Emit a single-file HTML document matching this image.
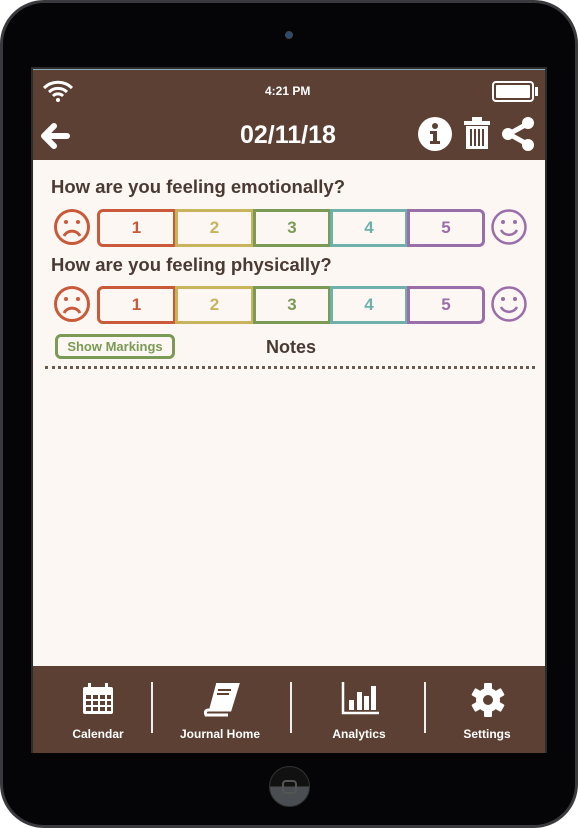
<!DOCTYPE html>
<html><head><style>
*{margin:0;padding:0;box-sizing:border-box}
body{width:578px;height:822px;background:#fff;font-family:"Liberation Sans",Arial,sans-serif;position:relative;overflow:hidden}
.dev{position:absolute;left:0;top:0;width:578px;height:828px;background:#050508;border-radius:44px;border:3px solid #3a3a3e}
.scr{position:absolute;left:31px;top:67px;width:516px;height:686px;background:#fcf7f3;border:2px solid #2c2c2c}
.hdr{position:absolute;left:0;top:0;width:512px;height:91px;background:#5c4033;border-top:1px solid #8ab}
.tab{position:absolute;left:0;top:597px;width:512px;height:87px;background:#5c4033}
.w{color:#fff;font-weight:bold;position:absolute}
.q{position:absolute;left:18px;font-size:18.5px;font-weight:bold;color:#4a3a33}
.row{position:absolute;left:64px;height:38px;width:388px}
.b{position:absolute;top:0;height:100%;border:3px solid;font-size:17px;font-weight:bold;text-align:center;line-height:32px}
.lbl{position:absolute;top:61px;font-size:12px;color:#fff;font-weight:bold;transform:translateX(-50%);white-space:nowrap}
.div{position:absolute;top:16px;width:2px;height:51px;background:#eee}
</style></head><body>
<div class="dev"></div>
<div style="position:absolute;left:285px;top:31px;width:8px;height:8px;border-radius:50%;background:#2a4a70;border:1px solid #444"></div>
<div style="position:absolute;left:269px;top:766px;width:41px;height:41px;border-radius:50%;background:linear-gradient(#111 50%,#4a4e52 50%);border:1px solid #333"></div>
<div style="position:absolute;left:282px;top:780px;width:15px;height:14px;border:2px solid #555;border-radius:4px"></div>
<div class="scr">
<div class="hdr">
<svg style="position:absolute;left:9px;top:10px" width="32" height="22" viewBox="0 0 32 22"><path d="M2 8A20 20 0 0 1 30 8M7 12A13 13 0 0 1 25 12M11 16A7 7 0 0 1 21 16" stroke="#fff" stroke-width="3" fill="none"/><circle cx="16" cy="20" r="2" fill="#fff"/></svg>
<div class="w" style="left:232px;top:14px;font-size:12px">4:21 PM</div>
<div style="position:absolute;left:459px;top:11px;width:42px;height:21px;border:2px solid #fff;border-radius:4px;padding:2px"><div style="background:#fff;height:100%;border-radius:1px"></div></div>
<div style="position:absolute;left:502px;top:17px;width:3px;height:9px;background:#fff"></div>
<svg style="position:absolute;left:6px;top:50px" width="32" height="32" viewBox="0 0 32 32"><path d="M28 16H6M15 6L5 16L15 26" stroke="#fff" stroke-width="6" fill="none" stroke-linecap="round" stroke-linejoin="round"/></svg>
<div class="w" style="left:207px;top:51px;font-size:25px">02/11/18</div>
<svg style="position:absolute;left:385px;top:47px" width="34" height="34" viewBox="0 0 34 34"><circle cx="17" cy="17" r="17" fill="#fff"/><circle cx="17" cy="9" r="3" fill="#5c4033"/><path d="M12 14h7v10h3v3H12v-3h3v-7h-3z" fill="#5c4033"/></svg>
<svg style="position:absolute;left:430px;top:47px" width="28" height="34" viewBox="0 0 28 34"><rect x="1" y="4" width="26" height="4" fill="#fff"/><rect x="9" y="0" width="10" height="5" fill="#fff"/><path d="M3 9h22v23H3z" fill="#fff"/><path d="M8 12v17M12 12v17M16 12v17M20 12v17" stroke="#5c4033" stroke-width="2"/></svg>
<svg style="position:absolute;left:468px;top:46px" width="34" height="36" viewBox="0 0 34 36"><path d="M26 8L8 18L26 28" stroke="#fff" stroke-width="5" fill="none"/><circle cx="27" cy="7" r="6" fill="#fff"/><circle cx="7" cy="18" r="6" fill="#fff"/><circle cx="27" cy="29" r="6" fill="#fff"/></svg>
</div>
<div class="q" style="top:107px">How are you feeling emotionally?</div>
<div class="q" style="top:185px">How are you feeling physically?</div>
<svg style="position:absolute;left:20px;top:139px" width="38" height="38" viewBox="0 0 38 38"><circle cx="19" cy="19" r="16.5" stroke="#c85a3a" stroke-width="3" fill="none"/><circle cx="13" cy="14" r="2" fill="#c85a3a"/><circle cx="25" cy="14" r="2" fill="#c85a3a"/><path d="M11 28A9 9 0 0 1 27 28" stroke="#c85a3a" stroke-width="3" fill="none"/></svg>
<svg style="position:absolute;left:457px;top:139px" width="38" height="38" viewBox="0 0 38 38"><circle cx="19" cy="19" r="16.5" stroke="#9a6ea8" stroke-width="2.5" fill="none"/><circle cx="13" cy="14" r="2" fill="#9a6ea8"/><circle cx="25" cy="14" r="2" fill="#9a6ea8"/><path d="M11 22A9 9 0 0 0 27 22" stroke="#9a6ea8" stroke-width="2.5" fill="none"/></svg>
<svg style="position:absolute;left:20px;top:216px" width="38" height="38" viewBox="0 0 38 38"><circle cx="19" cy="19" r="16.5" stroke="#c85a3a" stroke-width="3" fill="none"/><circle cx="13" cy="14" r="2" fill="#c85a3a"/><circle cx="25" cy="14" r="2" fill="#c85a3a"/><path d="M11 28A9 9 0 0 1 27 28" stroke="#c85a3a" stroke-width="3" fill="none"/></svg>
<svg style="position:absolute;left:457px;top:216px" width="38" height="38" viewBox="0 0 38 38"><circle cx="19" cy="19" r="16.5" stroke="#9a6ea8" stroke-width="2.5" fill="none"/><circle cx="13" cy="14" r="2" fill="#9a6ea8"/><circle cx="25" cy="14" r="2" fill="#9a6ea8"/><path d="M11 22A9 9 0 0 0 27 22" stroke="#9a6ea8" stroke-width="2.5" fill="none"/></svg>
<div class="row" style="top:140px">
<div class="b" style="left:0;width:79px;border-color:#c85a3a;color:#c85a3a;border-radius:6px 0 0 6px">1</div>
<div class="b" style="left:78px;width:79px;border-color:#c8b45a;color:#c8b45a">2</div>
<div class="b" style="left:156px;width:78px;border-color:#7a9a55;color:#7a9a55">3</div>
<div class="b" style="left:233px;width:78px;border-color:#70b0aa;color:#70b0aa">4</div>
<div class="b" style="left:310px;width:78px;border-color:#9a6ea8;color:#9a6ea8;border-radius:0 6px 6px 0">5</div>
</div>
<div class="row" style="top:217px">
<div class="b" style="left:0;width:79px;border-color:#c85a3a;color:#c85a3a;border-radius:6px 0 0 6px">1</div>
<div class="b" style="left:78px;width:79px;border-color:#c8b45a;color:#c8b45a">2</div>
<div class="b" style="left:156px;width:78px;border-color:#7a9a55;color:#7a9a55">3</div>
<div class="b" style="left:233px;width:78px;border-color:#70b0aa;color:#70b0aa">4</div>
<div class="b" style="left:310px;width:78px;border-color:#9a6ea8;color:#9a6ea8;border-radius:0 6px 6px 0">5</div>
</div>
<div style="position:absolute;left:22px;top:265px;width:120px;height:25px;border:3px solid #7a9a55;border-radius:6px;color:#7a9a55;font-size:13px;font-weight:bold;text-align:center;line-height:19px">Show Markings</div>
<div style="position:absolute;left:233px;top:268px;font-size:18px;font-weight:bold;color:#4a3a33">Notes</div>
<div style="position:absolute;left:12px;top:297px;width:490px;border-top:3px dotted #6a5a50"></div>
<div class="tab">
<svg style="position:absolute;left:49px;top:17px" width="32" height="32" viewBox="0 0 32 32"><rect x="1" y="4" width="30" height="27" rx="2" fill="#fff"/><g fill="#5c4033"><rect x="4" y="12" width="5" height="4"/><rect x="11" y="12" width="5" height="4"/><rect x="18" y="12" width="5" height="4"/><rect x="25" y="12" width="4" height="4"/><rect x="4" y="18" width="5" height="4"/><rect x="11" y="18" width="5" height="4"/><rect x="18" y="18" width="5" height="4"/><rect x="25" y="18" width="4" height="4"/><rect x="4" y="24" width="5" height="4"/><rect x="11" y="24" width="5" height="4"/><rect x="18" y="24" width="5" height="4"/><rect x="25" y="24" width="4" height="4"/></g><rect x="6" y="0" width="3" height="7" fill="#fff"/><rect x="23" y="0" width="3" height="7" fill="#fff"/></svg>
<svg style="position:absolute;left:171px;top:17px" width="36" height="34" viewBox="0 0 36 34"><path d="M12 1h22L26 27H5Q0 27 2 32h22" fill="none" stroke="#fff" stroke-width="3"/><path d="M12 1h22L26 27H5z" fill="#fff"/><path d="M14 7h13M13 11h12" stroke="#5c4033" stroke-width="2"/></svg>
<svg style="position:absolute;left:308px;top:16px" width="38" height="33" viewBox="0 0 38 33"><path d="M2 0v31h36" stroke="#fff" stroke-width="2.5" fill="none"/><rect x="8" y="18" width="5" height="10" fill="#fff"/><rect x="16" y="10" width="5" height="18" fill="#fff"/><rect x="23" y="14" width="5" height="14" fill="#fff"/><rect x="30" y="4" width="5" height="24" fill="#fff"/></svg>
<svg style="position:absolute;left:438px;top:17px" width="34" height="34" viewBox="0 0 34 34"><g fill="#fff"><circle cx="17" cy="17" r="12"/><rect x="13" y="0" width="8" height="34" rx="1"/><rect x="13" y="0" width="8" height="34" rx="1" transform="rotate(60 17 17)"/><rect x="13" y="0" width="8" height="34" rx="1" transform="rotate(120 17 17)"/></g><circle cx="17" cy="17" r="5" fill="#5c4033"/></svg>
<div class="lbl" style="left:65px">Calendar</div>
<div class="lbl" style="left:187px">Journal Home</div>
<div class="lbl" style="left:326px">Analytics</div>
<div class="lbl" style="left:454px">Settings</div>
<div class="div" style="left:118px"></div>
<div class="div" style="left:257px"></div>
<div class="div" style="left:391px"></div>
</div>
</div>
</body></html>
